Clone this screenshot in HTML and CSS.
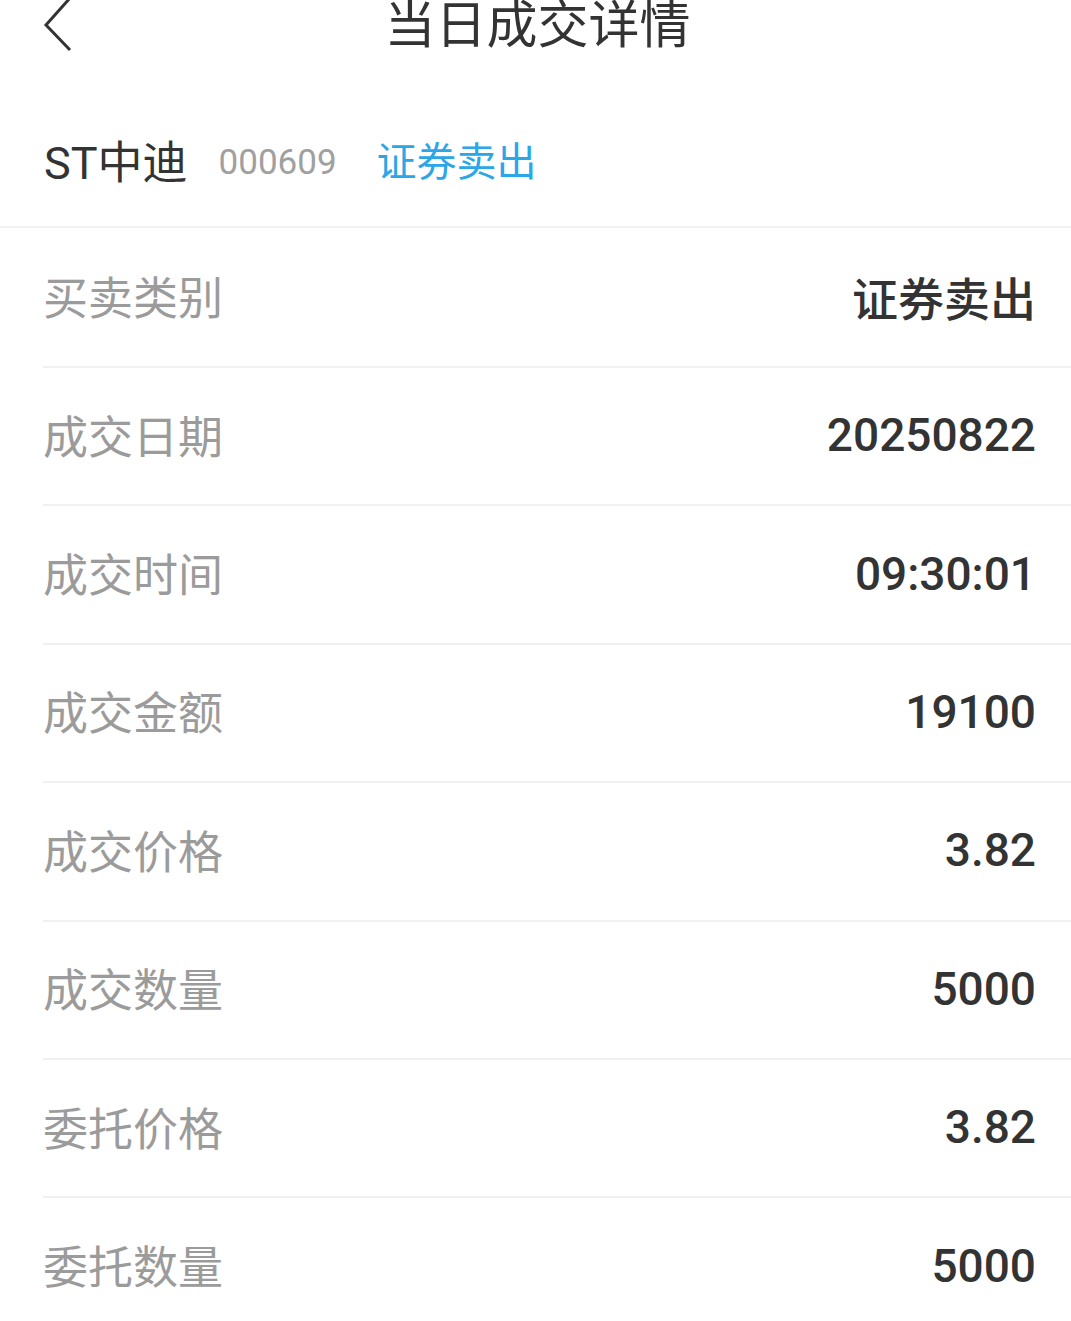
FILE: index.html
```html
<!DOCTYPE html>
<html lang="zh-CN">
<head>
    <meta charset="UTF-8">
    <meta name="viewport" content="width=device-width, initial-scale=1.0">
    <title>当日成交详情</title>
    <link rel="stylesheet" href="styles.css">
</head>
<body>
    <header class="topbar">
        <span class="back">
            <svg width="32" height="52" viewBox="0 0 32 52">
                <polyline points="28,-2 4,25 28,50" fill="none" stroke="#333" stroke-width="3"/>
            </svg>
        </span>
        <h1>当日成交详情</h1>
    </header>

    <div class="stock">
        <span class="stock-name">ST中迪</span>
        <span class="stock-code">000609</span>
        <span class="stock-type">证券卖出</span>
    </div>

    <ul class="detail">
        <li><span class="label">买卖类别</span><span class="value">证券卖出</span></li>
        <li><span class="label">成交日期</span><span class="value">20250822</span></li>
        <li><span class="label">成交时间</span><span class="value">09:30:01</span></li>
        <li><span class="label">成交金额</span><span class="value">19100</span></li>
        <li><span class="label">成交价格</span><span class="value">3.82</span></li>
        <li><span class="label">成交数量</span><span class="value">5000</span></li>
        <li><span class="label">委托价格</span><span class="value">3.82</span></li>
        <li><span class="label">委托数量</span><span class="value">5000</span></li>
    </ul>
</body>
</html>
```

FILE: styles.css
```css
body {
    margin: 0;
    padding: 0;
    background-color: #fff;
    font-family: Roboto, "Noto Sans CJK SC", sans-serif;
    color: #333;
}
.topbar {
    position: relative;
    height: 52px;
    display: flex;
    align-items: center;
    justify-content: center;
}
.topbar .back {
    position: absolute;
    left: 42px;
    top: 0;
    height: 52px;
}
.topbar h1 {
    margin: 0;
    font-size: 51px;
    font-weight: 400;
    line-height: 52px;
    color: #333;
    position: relative;
    left: 2px;
}
.stock {
    display: flex;
    align-items: center;
    height: 176px;
    padding: 0 44px;
    box-sizing: border-box;
    padding-top: 40px;
    border-bottom: 2px solid #f2f2f2;
}
.stock-name {
    font-size: 45px;
    color: #333;
}
.stock-code {
    font-size: 35px;
    color: #a0a0a0;
    margin-left: 31px;
    position: relative;
    top: 3px;
}
.stock-type {
    font-size: 40px;
    color: #2ba6e6;
    margin-left: 40px;
}
.detail {
    list-style: none;
    margin: 0;
    padding: 0 0 0 43px;
}
.detail li {
    display: flex;
    justify-content: space-between;
    align-items: center;
    height: 136.4px;
    padding-right: 35px;
    border-bottom: 2px solid #f0f0f0;
}
.detail li:first-child {
    height: 138px;
}
.label {
    font-size: 45px;
    color: #9b9b9b;
    position: relative;
    top: -2px;
}
.value {
    font-size: 46px;
    font-weight: 500;
    color: #333;
    position: relative;
    top: -1px;
}
```
